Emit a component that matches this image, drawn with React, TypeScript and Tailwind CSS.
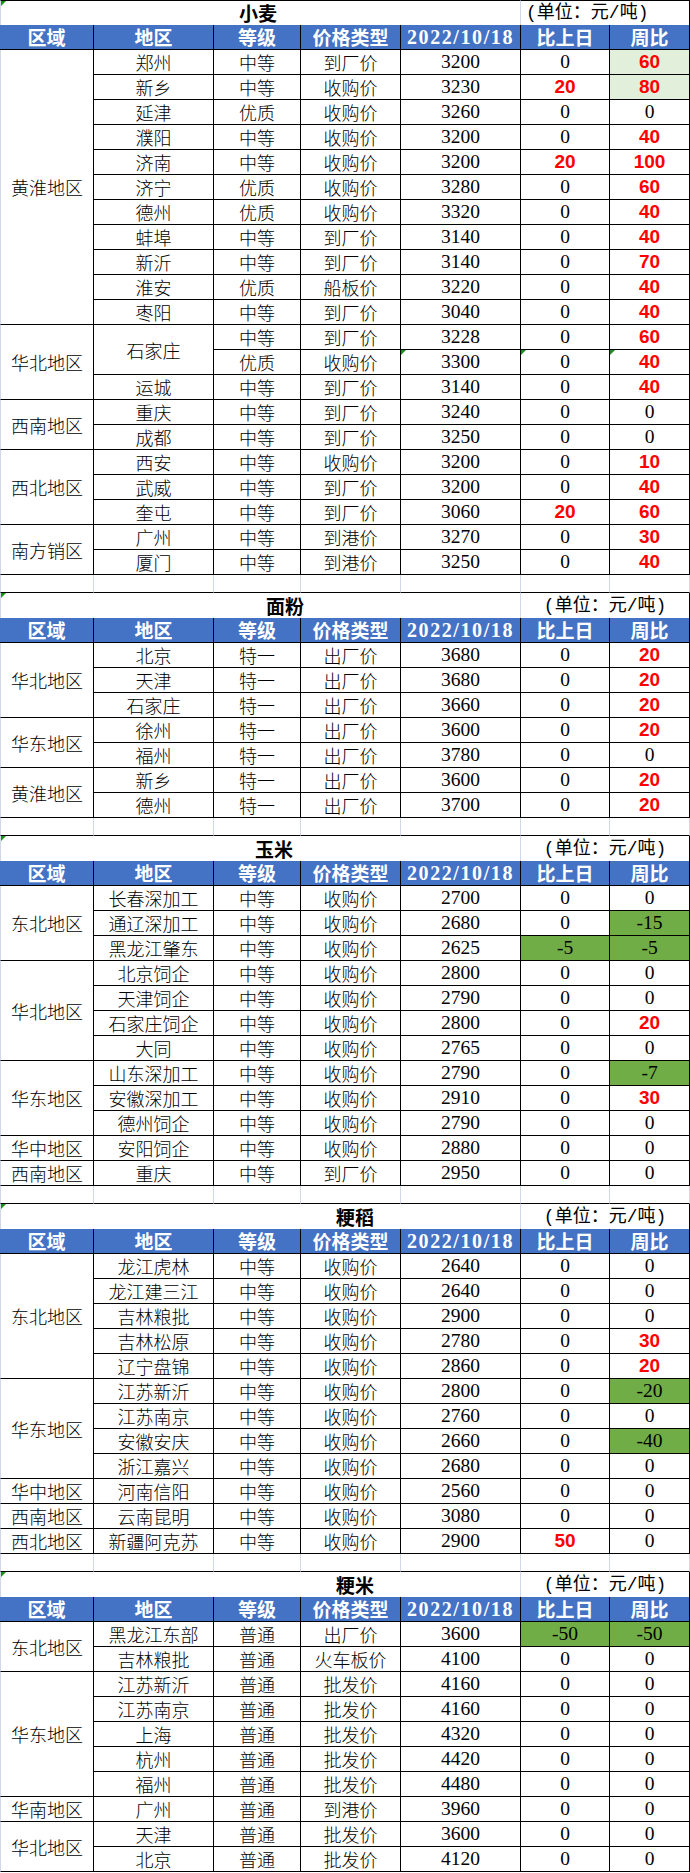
import React from "react";

type Row = { a?: string; as?: number; g: string; t: string; p: string; d: string; w: string; tri?: boolean };
type Group = { r: string; rows: Row[] };
type Section = { title: string; pl: string; unitLeft?: boolean; groups: Group[] };

const R = (a: string, g: string, t: string, p: string, d: string, w: string): Row => ({ a, g, t, p, d, w });

const sections: Section[] = [
  {
    title: "小麦",
    pl: "pl-[238px]",
    unitLeft: true,
    groups: [
      {
        r: "黄淮地区",
        rows: [
          R("郑州", "中等", "到厂价", "3200", "0", "l60"),
          R("新乡", "中等", "收购价", "3230", "r20", "l80"),
          R("延津", "优质", "收购价", "3260", "0", "0"),
          R("濮阳", "中等", "收购价", "3200", "0", "r40"),
          R("济南", "中等", "收购价", "3200", "r20", "r100"),
          R("济宁", "优质", "收购价", "3280", "0", "r60"),
          R("德州", "优质", "收购价", "3320", "0", "r40"),
          R("蚌埠", "中等", "到厂价", "3140", "0", "r40"),
          R("新沂", "中等", "到厂价", "3140", "0", "r70"),
          R("淮安", "优质", "船板价", "3220", "0", "r40"),
          R("枣阳", "中等", "到厂价", "3040", "0", "r40"),
        ],
      },
      {
        r: "华北地区",
        rows: [
          { a: "石家庄", as: 2, g: "中等", t: "到厂价", p: "3228", d: "0", w: "r60" },
          { g: "优质", t: "收购价", p: "3300", d: "0", w: "r40", tri: true },
          R("运城", "中等", "到厂价", "3140", "0", "r40"),
        ],
      },
      {
        r: "西南地区",
        rows: [R("重庆", "中等", "到厂价", "3240", "0", "0"), R("成都", "中等", "到厂价", "3250", "0", "0")],
      },
      {
        r: "西北地区",
        rows: [
          R("西安", "中等", "收购价", "3200", "0", "r10"),
          R("武威", "中等", "到厂价", "3200", "0", "r40"),
          R("奎屯", "中等", "到厂价", "3060", "r20", "r60"),
        ],
      },
      {
        r: "南方销区",
        rows: [R("广州", "中等", "到港价", "3270", "0", "r30"), R("厦门", "中等", "到港价", "3250", "0", "r40")],
      },
    ],
  },
  {
    title: "面粉",
    pl: "pl-[265px]",
    groups: [
      {
        r: "华北地区",
        rows: [
          R("北京", "特一", "出厂价", "3680", "0", "r20"),
          R("天津", "特一", "出厂价", "3680", "0", "r20"),
          R("石家庄", "特一", "出厂价", "3660", "0", "r20"),
        ],
      },
      {
        r: "华东地区",
        rows: [R("徐州", "特一", "出厂价", "3600", "0", "r20"), R("福州", "特一", "出厂价", "3780", "0", "0")],
      },
      {
        r: "黄淮地区",
        rows: [R("新乡", "特一", "出厂价", "3600", "0", "r20"), R("德州", "特一", "出厂价", "3700", "0", "r20")],
      },
    ],
  },
  {
    title: "玉米",
    pl: "pl-[254px]",
    groups: [
      {
        r: "东北地区",
        rows: [
          R("长春深加工", "中等", "收购价", "2700", "0", "0"),
          R("通辽深加工", "中等", "收购价", "2680", "0", "g-15"),
          R("黑龙江肇东", "中等", "收购价", "2625", "g-5", "g-5"),
        ],
      },
      {
        r: "华北地区",
        rows: [
          R("北京饲企", "中等", "收购价", "2800", "0", "0"),
          R("天津饲企", "中等", "收购价", "2790", "0", "0"),
          R("石家庄饲企", "中等", "收购价", "2800", "0", "r20"),
          R("大同", "中等", "收购价", "2765", "0", "0"),
        ],
      },
      {
        r: "华东地区",
        rows: [
          R("山东深加工", "中等", "收购价", "2790", "0", "g-7"),
          R("安徽深加工", "中等", "收购价", "2910", "0", "r30"),
          R("德州饲企", "中等", "收购价", "2790", "0", "0"),
        ],
      },
      { r: "华中地区", rows: [R("安阳饲企", "中等", "收购价", "2880", "0", "0")] },
      { r: "西南地区", rows: [R("重庆", "中等", "到厂价", "2950", "0", "0")] },
    ],
  },
  {
    title: "粳稻",
    pl: "pl-[335px]",
    groups: [
      {
        r: "东北地区",
        rows: [
          R("龙江虎林", "中等", "收购价", "2640", "0", "0"),
          R("龙江建三江", "中等", "收购价", "2640", "0", "0"),
          R("吉林粮批", "中等", "收购价", "2900", "0", "0"),
          R("吉林松原", "中等", "收购价", "2780", "0", "r30"),
          R("辽宁盘锦", "中等", "收购价", "2860", "0", "r20"),
        ],
      },
      {
        r: "华东地区",
        rows: [
          R("江苏新沂", "中等", "收购价", "2800", "0", "g-20"),
          R("江苏南京", "中等", "收购价", "2760", "0", "0"),
          R("安徽安庆", "中等", "收购价", "2660", "0", "g-40"),
          R("浙江嘉兴", "中等", "收购价", "2680", "0", "0"),
        ],
      },
      { r: "华中地区", rows: [R("河南信阳", "中等", "收购价", "2560", "0", "0")] },
      { r: "西南地区", rows: [R("云南昆明", "中等", "收购价", "3080", "0", "0")] },
      { r: "西北地区", rows: [R("新疆阿克苏", "中等", "收购价", "2900", "r50", "0")] },
    ],
  },
  {
    title: "粳米",
    pl: "pl-[335px]",
    groups: [
      {
        r: "东北地区",
        rows: [
          R("黑龙江东部", "普通", "出厂价", "3600", "g-50", "g-50"),
          R("吉林粮批", "普通", "火车板价", "4100", "0", "0"),
        ],
      },
      {
        r: "华东地区",
        rows: [
          R("江苏新沂", "普通", "批发价", "4160", "0", "0"),
          R("江苏南京", "普通", "批发价", "4160", "0", "0"),
          R("上海", "普通", "批发价", "4320", "0", "0"),
          R("杭州", "普通", "批发价", "4420", "0", "0"),
          R("福州", "普通", "批发价", "4480", "0", "0"),
        ],
      },
      { r: "华南地区", rows: [R("广州", "普通", "到港价", "3960", "0", "0")] },
      {
        r: "华北地区",
        rows: [R("天津", "普通", "批发价", "3600", "0", "0"), R("北京", "普通", "批发价", "4120", "0", "0")],
      },
    ],
  },
];

const CJK = "font-['Noto_Sans_CJK_SC',sans-serif]";
const BASE = "h-[25px] p-0 text-center align-middle border-r border-b border-black leading-[20px] whitespace-nowrap";

function Tri() {
  return (
    <span className="absolute left-0 top-0 w-0 h-0 border-t-[5px] border-r-[5px] border-t-[#1e8c1e] border-r-transparent" />
  );
}

function ValCell({ v, tri }: { v: string; tri?: boolean }) {
  const k = v[0];
  if (k === "r" || k === "l") {
    return (
      <td
        className={`relative ${BASE} ${k === "l" ? "bg-[#e2efda]" : "bg-white"} font-['Liberation_Sans',sans-serif] font-bold text-[19px] text-[#ff0000]`}
      >
        {tri && <Tri />}
        {v.slice(1)}
      </td>
    );
  }
  if (k === "g") {
    return (
      <td className={`relative ${BASE} bg-[#70ad47] font-['Liberation_Serif',serif] text-[19.5px] text-black`}>
        {tri && <Tri />}
        {v.slice(1)}
      </td>
    );
  }
  return (
    <td className={`relative ${BASE} bg-white font-['Liberation_Serif',serif] text-[19.5px] text-black`}>
      {tri && <Tri />}
      {v}
    </td>
  );
}

function TitleRow({ s, first }: { s: Section; first: boolean }) {
  return (
    <tr>
      <td
        colSpan={5}
        className={`relative h-[25px] p-0 ${s.pl} text-left align-middle leading-[20px] border-l border-r border-[#d0d7e5] ${first ? "border-t border-t-black" : ""} ${CJK} font-bold text-[19px] text-black whitespace-nowrap`}
      >
        <Tri />
        {s.title}
      </td>
      <td
        colSpan={2}
        className={`h-[25px] p-0 ${s.unitLeft ? "text-left pl-[5px]" : "text-center"} align-middle leading-[20px] border-r border-black ${first ? "border-t" : ""} font-['Liberation_Mono','Noto_Sans_CJK_SC',monospace] text-[18px] text-black whitespace-nowrap`}
      >
        (单位：元/吨)
      </td>
    </tr>
  );
}

function HeaderRow() {
  const cjk = `${BASE} bg-[#4472c4] text-white ${CJK} font-bold text-[19px]`;
  return (
    <tr>
      <td className={cjk}>区域</td>
      <td className={cjk}>地区</td>
      <td className={cjk}>等级</td>
      <td className={cjk}>价格类型</td>
      <td className={`${BASE} bg-[#4472c4] text-white font-['Liberation_Serif',serif] font-bold text-[20px] tracking-[1.6px]`}>
        2022/10/18
      </td>
      <td className={cjk}>比上日</td>
      <td className={cjk}>周比</td>
    </tr>
  );
}

function BlankRow() {
  const c = "h-[18px] p-0 border-r border-b border-r-[#d0d7e5] border-b-black bg-white";
  return (
    <tr>
      <td className={`${c} border-l border-l-[#d0d7e5]`} />
      <td className={c} />
      <td className={c} />
      <td className={c} />
      <td className={c} />
      <td className={c} />
      <td className={c} />
    </tr>
  );
}

function SectionRows({ s, first, last }: { s: Section; first: boolean; last: boolean }) {
  const cjk = `${BASE} bg-white ${CJK} font-light text-[18px] text-black`;
  const out: React.ReactNode[] = [];
  out.push(<TitleRow key="t" s={s} first={first} />);
  out.push(<HeaderRow key="h" />);
  s.groups.forEach((g, gi) => {
    g.rows.forEach((r, ri) => {
      out.push(
        <tr key={`${gi}-${ri}`}>
          {ri === 0 && (
            <td rowSpan={g.rows.length} className={`${cjk} border-l border-l-[#d0d7e5]`}>
              {g.r}
            </td>
          )}
          {r.a !== undefined && (
            <td rowSpan={r.as ?? 1} className={cjk}>
              {r.a}
            </td>
          )}
          <td className={cjk}>{r.g}</td>
          <td className={cjk}>{r.t}</td>
          <td className={`relative ${BASE} bg-white font-['Liberation_Serif',serif] text-[19.5px] text-black`}>
            {r.tri && <Tri />}
            {r.p}
          </td>
          <ValCell v={r.d} tri={r.tri} />
          <ValCell v={r.w} tri={r.tri} />
        </tr>
      );
    });
  });
  if (!last) out.push(<BlankRow key="b" />);
  return <>{out}</>;
}

export default function App() {
  return (
    <div className="w-[690px] bg-white">
      <table className="table-fixed border-separate border-spacing-0 w-[690px]">
        <colgroup>
          <col className="w-[94px]" />
          <col className="w-[120px]" />
          <col className="w-[87px]" />
          <col className="w-[100px]" />
          <col className="w-[120px]" />
          <col className="w-[89px]" />
          <col className="w-[80px]" />
        </colgroup>
        <tbody>
          {sections.map((s, i) => (
            <SectionRows key={s.title} s={s} first={i === 0} last={i === sections.length - 1} />
          ))}
        </tbody>
      </table>
    </div>
  );
}
